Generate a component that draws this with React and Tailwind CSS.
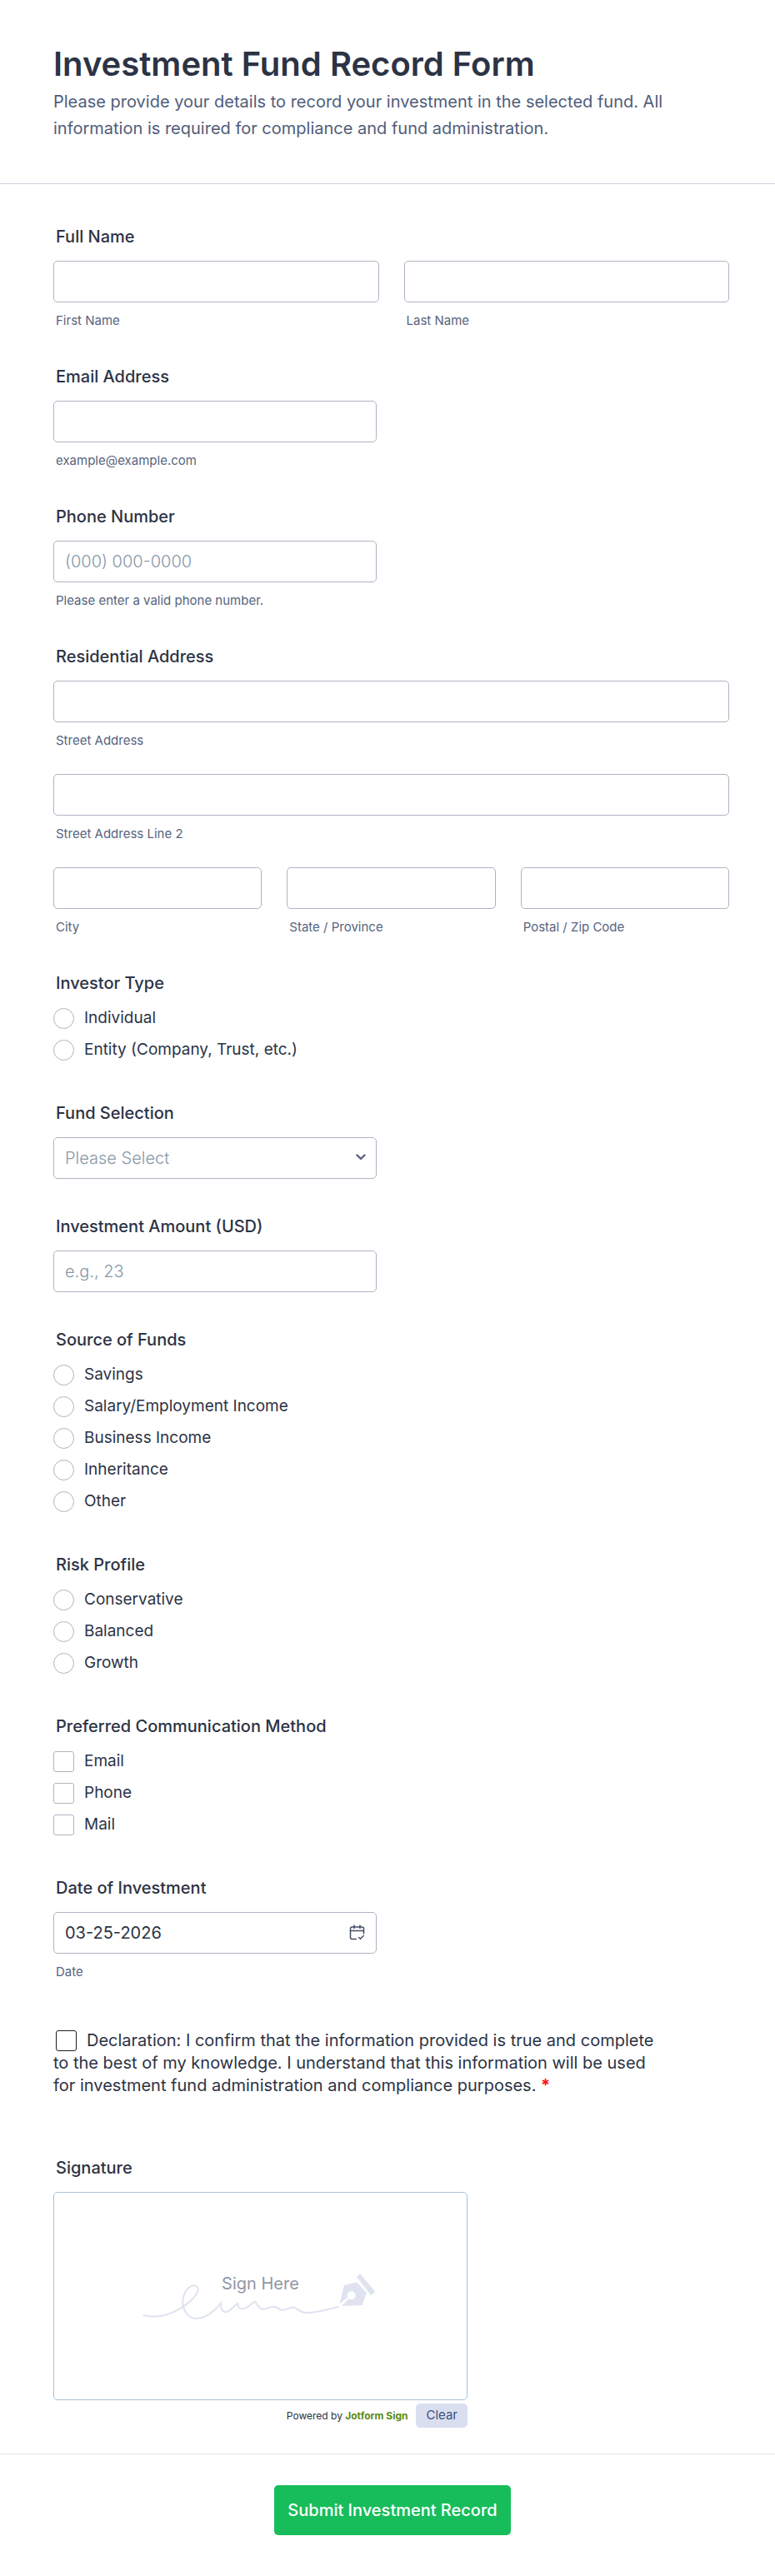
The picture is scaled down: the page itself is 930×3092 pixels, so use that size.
import React, { useState } from 'react';

const sources = ['Savings', 'Salary/Employment Income', 'Business Income', 'Inheritance', 'Other'];

const inputStyle =
    'block w-full h-[50px] px-[13px] bg-white border border-[#afb4c3] rounded-[5px] text-xl text-[#2c3345] placeholder:font-light placeholder:text-[#8798a8] focus:outline-none focus:ring-2 focus:ring-blue-500';

const labelStyle = 'block mb-[17px] pl-[3px] text-xl leading-6 font-medium text-[#2c3345]';

function TextField({ id, sub, ...props }) {
    return (
        <div>
            <input id={id} type="text" className={inputStyle} {...props} />
            {sub && (
                <label htmlFor={id} className="block mt-3 pl-[3px] text-[15px] leading-5 text-[#57647e]">
                    {sub}
                </label>
            )}
        </div>
    );
}

function Options({ title, name, type, options }) {
    return (
        <fieldset>
            <legend className={labelStyle}>{title}</legend>
            <div className="flex flex-col gap-3 pb-[6px]">
                {options.map((option) => (
                    <label key={option} className="flex items-center h-[26px] gap-3 text-[19px] text-[#2c3345]">
                        <input
                            type={type}
                            name={name}
                            value={option}
                            className={
                                type === 'radio'
                                    ? 'appearance-none size-[25px] shrink-0 bg-white border border-[#afb4c3] rounded-full checked:border-8 checked:border-blue-600'
                                    : 'appearance-none size-[25px] shrink-0 bg-white border border-[#afb4c3] rounded-[3px] checked:bg-blue-600'
                            }
                        />
                        {option}
                    </label>
                ))}
            </div>
        </fieldset>
    );
}

function SignatureDrawing() {
    return (
        <svg className="w-[288px] h-[60px]" viewBox="56 80 864 180" fill="none" aria-hidden="true">
            <path
                d="M64 239C110 250 160 240 205 210C250 182 268 150 260 138C252 126 222 130 210 170C198 215 225 250 255 251C290 251 320 225 345 195C342 215 350 228 362 228C380 224 390 205 405 197C405 212 415 220 430 214C445 210 458 194 467 190C475 195 478 217 495 217C510 217 520 208 535 208C550 208 550 221 568 220C585 219 595 209 608 211C620 215 625 228 650 230C690 231 730 217 768 208"
                stroke="#dfe3f0"
                strokeWidth="6"
            />
            <path d="M832 100L846 90L900 155L884 167Z" fill="#dfe3f0" />
            <path d="M771 199L788 131L833 120L869 158L853 203L779 206L805 179A15 15 0 1 0 801 174Z" fill="#dfe3f0" />
        </svg>
    );
}

function App() {
    const [date, setDate] = useState('03-25-2026');

    return (
        <form
            className="w-full bg-white font-[Inter,sans-serif] text-[#2c3345]"
            onSubmit={(e) => e.preventDefault()}
        >
            {/* Header */}
            <header className="px-16 pt-[53px] pb-[50px] border-b border-[#d0d3df]">
                <h1 className="text-[40px] leading-[48px] font-semibold">Investment Fund Record Form</h1>
                <p className="mt-[5px] max-w-[760px] text-xl leading-8 text-[#4f5d7a]">
                    Please provide your details to record your investment in the selected fund. All
                    information is required for compliance and fund administration.
                </p>
            </header>

            {/* Fields */}
            <div className="flex flex-col gap-[45px] pl-16 pr-[55px] pt-[51px] pb-[31px]">
                <fieldset>
                    <legend className={labelStyle}>Full Name</legend>
                    <div className="grid grid-cols-2 gap-[30px]">
                        <TextField id="first" sub="First Name" />
                        <TextField id="last" sub="Last Name" />
                    </div>
                </fieldset>

                <div className="max-w-[388px]">
                    <label htmlFor="email" className={labelStyle}>Email Address</label>
                    <TextField id="email" type="email" sub="example@example.com" />
                </div>

                <div className="max-w-[388px]">
                    <label htmlFor="phone" className={labelStyle}>Phone Number</label>
                    <TextField id="phone" type="tel" placeholder="(000) 000-0000" sub="Please enter a valid phone number." />
                </div>

                <fieldset>
                    <legend className={labelStyle}>Residential Address</legend>
                    <div className="flex flex-col gap-[30px]">
                        <TextField id="street" sub="Street Address" />
                        <TextField id="street2" sub="Street Address Line 2" />
                        <div className="grid grid-cols-3 gap-[30px]">
                            <TextField id="city" sub="City" />
                            <TextField id="state" sub="State / Province" />
                            <TextField id="zip" sub="Postal / Zip Code" />
                        </div>
                    </div>
                </fieldset>

                <Options title="Investor Type" name="investor" type="radio" options={['Individual', 'Entity (Company, Trust, etc.)']} />

                <div className="max-w-[388px]">
                    <label htmlFor="fund" className={labelStyle}>Fund Selection</label>
                    <div className="relative">
                        <select
                            id="fund"
                            className="appearance-none block w-full h-[50px] px-[13px] bg-white border border-[#afb4c3] rounded-[5px] text-xl font-light text-[#8798a8]"
                        >
                            <option>Please Select</option>
                        </select>
                        <svg className="absolute right-[13px] top-[20px] w-3 h-2 pointer-events-none" viewBox="0 0 12 8" fill="none">
                            <path d="M1.5 1.5L6 6L10.5 1.5" stroke="#58627d" strokeWidth="2.4" strokeLinecap="round" strokeLinejoin="round" />
                        </svg>
                    </div>
                </div>

                <div className="max-w-[388px]">
                    <label htmlFor="amount" className={labelStyle}>Investment Amount (USD)</label>
                    <TextField id="amount" placeholder="e.g., 23" />
                </div>

                <Options title="Source of Funds" name="source" type="radio" options={sources} />
                <Options title="Risk Profile" name="risk" type="radio" options={['Conservative', 'Balanced', 'Growth']} />
                <Options title="Preferred Communication Method" name="contact" type="checkbox" options={['Email', 'Phone', 'Mail']} />

                <div className="max-w-[388px]">
                    <label htmlFor="date" className={labelStyle}>Date of Investment</label>
                    <div className="relative">
                        <TextField id="date" value={date} onChange={(e) => setDate(e.target.value)} sub="Date" />
                        <button type="button" aria-label="Choose date" className="absolute right-[14px] top-[15px]">
                            <svg className="size-[19px]" viewBox="0 0 19 19" fill="none" stroke="#454e63" strokeWidth="1.5" strokeLinecap="round" strokeLinejoin="round">
                                <path d="M8.5 17.5H3.5C2.2 17.5 1.5 16.8 1.5 15.5V5C1.5 3.7 2.2 3 3.5 3H15.5C16.8 3 17.5 3.7 17.5 5V11" />
                                <path d="M1.5 7.5H17.5M6 1V4.5M13 1V4.5M11.5 15.5L13.5 17.3L17.3 13.5" />
                            </svg>
                        </button>
                    </div>
                </div>

                {/* Declaration */}
                <label className="block max-w-[740px] pt-[14px] pb-7 text-xl leading-[27px]">
                    <input
                        type="checkbox"
                        name="declaration"
                        required
                        className="appearance-none size-[25px] ml-[3px] mr-3 align-[-6px] bg-white border border-[#1f1f28] rounded-[3px] checked:bg-blue-600"
                    />
                    Declaration: I confirm that the information provided is true and complete to the best of my
                    knowledge. I understand that this information will be used for investment fund administration
                    and compliance purposes. <b className="text-[#fa1414]">*</b>
                </label>

                {/* Signature */}
                <div className="max-w-[497px]">
                    <p className={labelStyle}>Signature</p>
                    <div className="relative flex items-center justify-center h-[250px] border border-[#a9c2dc] rounded-[5px]">
                        <SignatureDrawing />
                        <span className="absolute inset-0 flex items-center justify-center pb-[30px] text-xl text-[#9196a5]">
                            Sign Here
                        </span>
                    </div>
                    <div className="flex items-center justify-end gap-[10px] mt-1">
                        <span className="text-xs">
                            Powered by <a href="#" className="font-bold text-[#5c8a14]">Jotform Sign</a>
                        </span>
                        <button type="button" className="h-[29px] px-3 bg-[#dadff0] rounded-[5px] text-[15px] text-[#41507a]">
                            Clear
                        </button>
                    </div>
                </div>
            </div>

            {/* Submit */}
            <footer className="flex justify-center pt-[37px] pb-12 pl-3 border-t border-[#e6e7ef]">
                <button type="submit" className="h-[60px] px-4 bg-[#18bd5b] rounded-[5px] text-xl font-medium text-white hover:bg-green-600">
                    Submit Investment Record
                </button>
            </footer>
        </form>
    );
}

export default App;
